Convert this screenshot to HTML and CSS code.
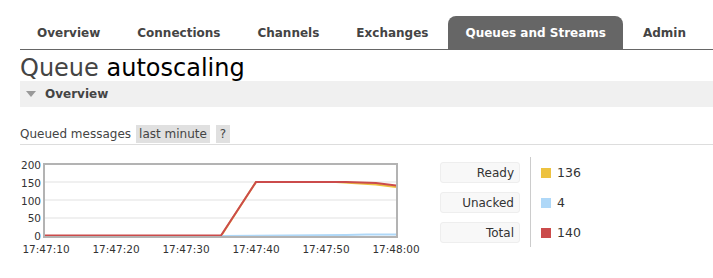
FILE: index.html
```html
<!DOCTYPE html>
<html>
<head>
<meta charset="utf-8">
<link rel="stylesheet" href="styles.css">
</head>
<body>
<ul class="nav">
  <li class="tab">Overview</li>
  <li class="tab">Connections</li>
  <li class="tab">Channels</li>
  <li class="tab">Exchanges</li>
  <li class="tab selected">Queues and Streams</li>
  <li class="tab">Admin</li>
</ul>
<h1 class="title">Queue <span class="name">autoscaling</span></h1>
<div class="section-head"><span class="tri"></span>Overview</div>
<div class="updatable">
  <span class="upd-label">Queued messages</span>
  <span class="pill">last minute</span>
  <span class="pill q">?</span>
</div>
<div class="chart-row">
  <svg class="chart" width="400" height="105" viewBox="0 0 400 105">
    <line x1="24" y1="28" x2="376" y2="28" stroke="#f0f0f0" stroke-width="2"/>
    <line x1="24" y1="46" x2="376" y2="46" stroke="#f0f0f0" stroke-width="2"/>
    <line x1="24" y1="64" x2="376" y2="64" stroke="#f0f0f0" stroke-width="2"/>
    <polyline points="24,82 201,82 236,28 316,28 356,30.5 376,33" fill="none" stroke="#edc240" stroke-width="2"/>
    <polyline points="201,82 326,81 346,80.6 376,80.6" fill="none" stroke="#afd8f8" stroke-width="2"/>
    <polyline points="24,81.5 201,81.5 236,28 326,28 356,29 376,31.6" fill="none" stroke="#cb4b4b" stroke-width="2"/>
    <rect x="24" y="10" width="353" height="73" fill="none" stroke="#b3b3b3" stroke-width="2"/>
    <g class="ylab" text-anchor="end">
      <text x="21" y="15">200</text>
      <text x="21" y="33">150</text>
      <text x="21" y="51">100</text>
      <text x="21" y="68">50</text>
      <text x="21" y="86">0</text>
    </g>
    <g class="xlab" text-anchor="middle">
      <text x="26" y="99">17:47:10</text>
      <text x="96" y="99">17:47:20</text>
      <text x="166" y="99">17:47:30</text>
      <text x="236" y="99">17:47:40</text>
      <text x="306" y="99">17:47:50</text>
      <text x="376" y="99">17:48:00</text>
    </g>
  </svg>
  <div class="legend">
    <div class="labels">
      <div class="lrow"><span class="lbox">Ready</span></div>
      <div class="lrow"><span class="lbox">Unacked</span></div>
      <div class="lrow"><span class="lbox">Total</span></div>
    </div>
    <div class="values">
      <div class="vrow"><span class="sw ready"></span>136</div>
      <div class="vrow"><span class="sw unacked"></span>4</div>
      <div class="vrow"><span class="sw total"></span>140</div>
    </div>
  </div>
</div>
</body>
</html>
```
FILE: styles.css
```css
html, body {
  margin: 0;
  padding: 0;
  background: #fff;
}
body {
  padding-left: 20px;
  font-family: "DejaVu Sans", Verdana, sans-serif;
  font-size: 12px;
  color: #444;
}
.nav {
  list-style: none;
  margin: 16px 0 0 0;
  padding: 0;
  display: flex;
  border-bottom: 1px solid #666;
}
.tab {
  height: 33px;
  line-height: 35px;
  padding: 0 17px;
  margin-right: 3px;
  font-weight: bold;
  color: #444;
  border-radius: 8px 8px 0 0;
}
.tab.selected {
  background: #666;
  color: #fff;
}
.title {
  margin: 5px 0 0 0;
  font-size: 24px;
  line-height: 27px;
  font-weight: normal;
  color: #444;
}
.title .name {
  color: #000;
}
.section-head {
  margin-top: -1px;
  height: 26px;
  line-height: 26px;
  background: #f0f0f0;
  font-weight: bold;
  color: #444;
  display: flex;
  align-items: center;
}
.tri {
  width: 0;
  height: 0;
  border-left: 5px solid transparent;
  border-right: 5px solid transparent;
  border-top: 6px solid #999;
  margin: 0 9px 0 6px;
}
.updatable {
  margin-top: 18px;
  height: 19px;
  border-bottom: 1px solid #ddd;
  display: flex;
  align-items: stretch;
  line-height: 19px;
}
.upd-label {
  margin-right: 5px;
}
.pill {
  background: #e0e0e0;
  padding: 0 3px;
  height: 18px;
  line-height: 18px;
  margin-right: 6px;
}
.pill.q {
  padding: 0 4px;
}
.chart-row {
  display: flex;
  align-items: flex-start;
}
.chart {
  display: block;
  margin-top: 9px;
  overflow: visible;
}
.chart text {
  font-family: "DejaVu Sans", Verdana, sans-serif;
  font-size: 10.5px;
  fill: #333;
}
.legend {
  display: flex;
  margin-top: 12px;
  margin-left: 20px;
}
.labels {
  width: 80px;
  margin-right: 10px;
}
.lrow {
  height: 30px;
  display: flex;
  align-items: center;
}
.lbox {
  display: block;
  width: 100%;
  box-sizing: border-box;
  height: 21px;
  line-height: 21px;
  text-align: right;
  padding-right: 5px;
  background: #f8f8f8;
  border: 1px solid #eee;
  border-radius: 3px;
  color: #333;
}
.values {
  border-left: 1px solid #ccc;
  padding-left: 10px;
}
.vrow {
  height: 30px;
  display: flex;
  align-items: center;
  padding-top: 1px;
  box-sizing: border-box;
  font-size: 12.5px;
  color: #333;
}
.sw {
  width: 10px;
  height: 10px;
  margin-right: 6px;
}
.sw.ready { background: #edc240; }
.sw.unacked { background: #afd8f8; }
.sw.total { background: #cb4b4b; }
```
